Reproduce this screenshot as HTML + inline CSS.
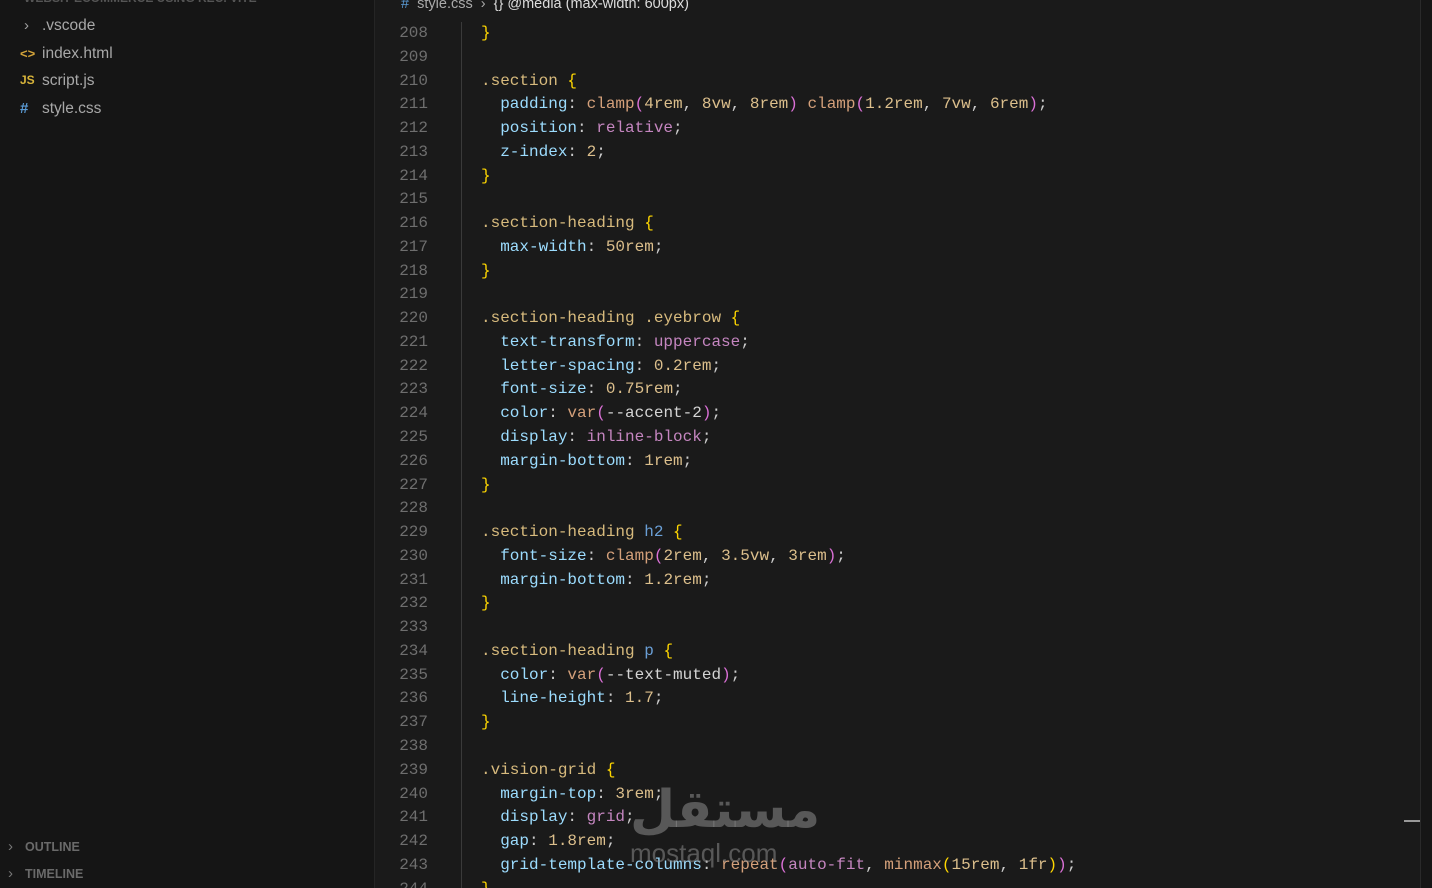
<!DOCTYPE html>
<html><head><meta charset="utf-8"><style>
html,body{margin:0;padding:0;width:1432px;height:888px;overflow:hidden;background:#1a1a1a;position:relative}
#side{position:absolute;left:0;top:0;width:374px;height:888px;background:#151515;border-right:1px solid #252525;font-family:"Liberation Sans",sans-serif;color:#a8a8a8;font-size:15.5px}
.it{position:absolute;left:42px}
.ic{position:absolute;left:20px;font-size:13px;font-weight:bold}
#ed{position:absolute;left:375px;top:0;width:1045px;height:888px;background:#1a1a1a}
#rs{position:absolute;left:1420px;top:0;width:12px;height:888px;background:#161616;border-left:1px solid #2a2a2a}
.ln{position:absolute;left:375px;width:53px;text-align:right;color:#6e6e6e;font-family:"Liberation Mono",monospace;font-size:16px;line-height:23.77px;height:866px;overflow:hidden}
.cd{position:absolute;left:481px;white-space:pre;color:#cccccc;font-family:"Liberation Mono",monospace;font-size:16px;line-height:23.77px;height:866px;overflow:hidden}
.s{color:#d7ba7d}.p{color:#9cdcfe}.n{color:#dcbf8c}.f{color:#d4a07a}.k{color:#c586c0}.b{color:#ffd700}.q{color:#da70d6}.t{color:#6a9fd6}.w{color:#d4d4d4}
</style></head><body>
<div id="side">
<div style="position:absolute;left:24px;top:-9px;font-size:12px;font-weight:bold;color:#555">WEBSIT ECOMMERCE USING REC. VITE</div>
<div class="ic" style="left:24px;top:17px;color:#a0a0a0;font-weight:normal;font-size:15px">›</div><div class="it" style="top:17px">.vscode</div>
<div class="ic" style="top:46px;color:#d4a43a">&lt;&gt;</div><div class="it" style="top:45px">index.html</div>
<div class="ic" style="top:73px;color:#d8b43a;font-size:12px">JS</div><div class="it" style="top:72px">script.js</div>
<div class="ic" style="top:100px;color:#5a9bd5;font-size:15px">#</div><div class="it" style="top:100px">style.css</div>
<div style="position:absolute;left:8px;top:838px;font-size:15px;color:#777">›</div><div style="position:absolute;left:25px;top:840px;font-size:12.5px;font-weight:bold;color:#6a6a6a">OUTLINE</div>
<div style="position:absolute;left:8px;top:865px;font-size:15px;color:#777">›</div><div style="position:absolute;left:25px;top:867px;font-size:12.5px;font-weight:bold;color:#6a6a6a">TIMELINE</div>
</div>
<div id="ed"></div>
<div id="rs"></div>
<div style="position:absolute;left:1404px;top:820px;width:16px;height:2px;background:#999"></div>
<div style="position:absolute;left:461px;top:22px;width:1px;height:866px;background:#3a3a3a"></div>
<div style="position:absolute;left:401px;top:-4px;font-family:'Liberation Sans',sans-serif;font-size:14.5px;color:#aaa;white-space:pre"><span style="color:#5a9bd5">#</span>  style.css  ›  <span style="color:#ddd">{} @media (max-width: 600px)</span></div>
<div class="ln" style="top:22px">208<br>209<br>210<br>211<br>212<br>213<br>214<br>215<br>216<br>217<br>218<br>219<br>220<br>221<br>222<br>223<br>224<br>225<br>226<br>227<br>228<br>229<br>230<br>231<br>232<br>233<br>234<br>235<br>236<br>237<br>238<br>239<br>240<br>241<br>242<br>243<br>244</div>
<div class="cd" style="top:22px"><span class="b">}</span>

<span class="s">.section</span> <span class="b">{</span>
  <span class="p">padding</span>: <span class="f">clamp</span><span class="q">(</span><span class="n">4rem</span>, <span class="n">8vw</span>, <span class="n">8rem</span><span class="q">)</span> <span class="f">clamp</span><span class="q">(</span><span class="n">1.2rem</span>, <span class="n">7vw</span>, <span class="n">6rem</span><span class="q">)</span>;
  <span class="p">position</span>: <span class="k">relative</span>;
  <span class="p">z-index</span>: <span class="n">2</span>;
<span class="b">}</span>

<span class="s">.section-heading</span> <span class="b">{</span>
  <span class="p">max-width</span>: <span class="n">50rem</span>;
<span class="b">}</span>

<span class="s">.section-heading .eyebrow</span> <span class="b">{</span>
  <span class="p">text-transform</span>: <span class="k">uppercase</span>;
  <span class="p">letter-spacing</span>: <span class="n">0.2rem</span>;
  <span class="p">font-size</span>: <span class="n">0.75rem</span>;
  <span class="p">color</span>: <span class="f">var</span><span class="q">(</span><span class="w">--accent-2</span><span class="q">)</span>;
  <span class="p">display</span>: <span class="k">inline-block</span>;
  <span class="p">margin-bottom</span>: <span class="n">1rem</span>;
<span class="b">}</span>

<span class="s">.section-heading</span> <span class="t">h2</span> <span class="b">{</span>
  <span class="p">font-size</span>: <span class="f">clamp</span><span class="q">(</span><span class="n">2rem</span>, <span class="n">3.5vw</span>, <span class="n">3rem</span><span class="q">)</span>;
  <span class="p">margin-bottom</span>: <span class="n">1.2rem</span>;
<span class="b">}</span>

<span class="s">.section-heading</span> <span class="t">p</span> <span class="b">{</span>
  <span class="p">color</span>: <span class="f">var</span><span class="q">(</span><span class="w">--text-muted</span><span class="q">)</span>;
  <span class="p">line-height</span>: <span class="n">1.7</span>;
<span class="b">}</span>

<span class="s">.vision-grid</span> <span class="b">{</span>
  <span class="p">margin-top</span>: <span class="n">3rem</span>;
  <span class="p">display</span>: <span class="k">grid</span>;
  <span class="p">gap</span>: <span class="n">1.8rem</span>;
  <span class="p">grid-template-columns</span>: <span class="f">repeat</span><span class="q">(</span><span class="k">auto-fit</span>, <span class="f">minmax</span><span class="b">(</span><span class="n">15rem</span>, <span class="n">1fr</span><span class="b">)</span><span class="q">)</span>;
<span class="b">}</span></div>
<div style="position:absolute;left:630px;top:780px;font-family:'Liberation Sans','DejaVu Sans',sans-serif;font-size:52px;font-weight:bold;color:rgba(150,150,150,0.5);line-height:60px">مستقل</div>
<div style="position:absolute;left:630px;top:838px;font-family:'Liberation Sans',sans-serif;font-size:26px;color:rgba(150,150,150,0.5)">mostaql.com</div>
</body></html>
